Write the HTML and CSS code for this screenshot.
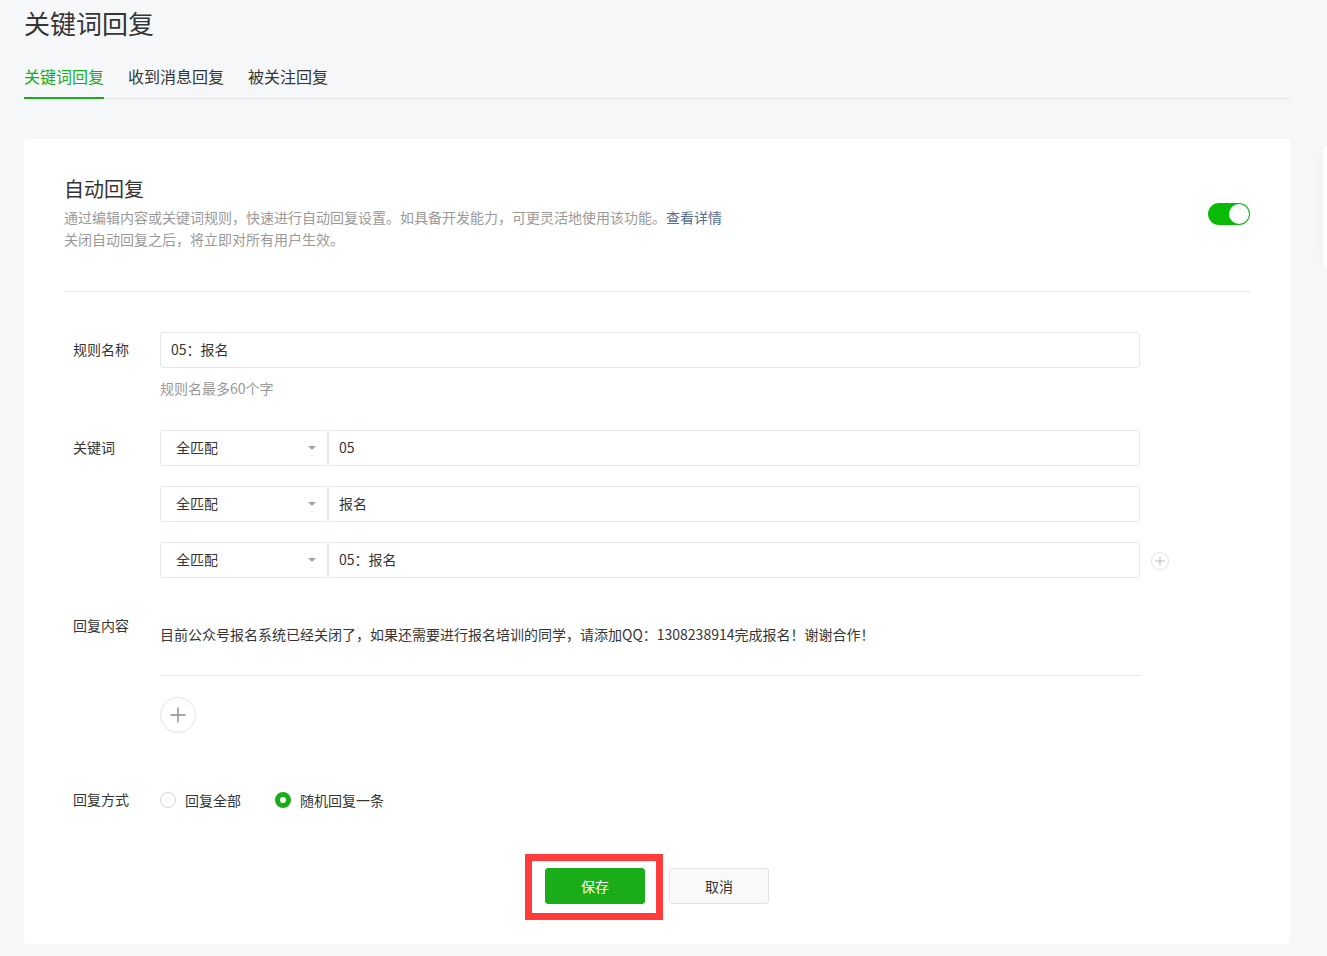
FILE: index.html
```html
<!DOCTYPE html>
<html lang="zh-CN">
<head>
<meta charset="utf-8">
<title>关键词回复</title>
<link rel="stylesheet" href="styles.css">
</head>
<body>
<div class="page">
  <h1 class="title">关键词回复</h1>
  <nav class="tabs">
    <span class="tab active">关键词回复</span>
    <span class="tab">收到消息回复</span>
    <span class="tab">被关注回复</span>
  </nav>
  <section class="card">
    <div class="card-head">
      <div class="head-text">
        <h2 class="head-title">自动回复</h2>
        <p class="desc">通过编辑内容或关键词规则，快速进行自动回复设置。如具备开发能力，可更灵活地使用该功能。<a class="link">查看详情</a></p>
        <p class="desc">关闭自动回复之后，将立即对所有用户生效。</p>
      </div>
      <div class="toggle"><span class="knob"></span></div>
    </div>

    <div class="form">
      <div class="row row-name">
        <div class="label">规则名称</div>
        <div class="field">
          <div class="input">05：报名</div>
          <div class="hint">规则名最多60个字</div>
        </div>
      </div>

      <div class="row row-kw">
        <div class="label">关键词</div>
        <div class="field kw-list">
          <div class="kw-line">
            <div class="select">全匹配<span class="arrow"></span></div>
            <div class="input kw-input">05</div>
          </div>
          <div class="kw-line">
            <div class="select">全匹配<span class="arrow"></span></div>
            <div class="input kw-input">报名</div>
          </div>
          <div class="kw-line">
            <div class="select">全匹配<span class="arrow"></span></div>
            <div class="input kw-input">05：报名</div>
            <span class="mini-add">
              <svg width="18" height="18" viewBox="0 0 18 18"><circle cx="9" cy="9" r="8.5" fill="none" stroke="#e2e2e2"/><path d="M9 4.5v9M4.5 9h9" stroke="#b5b5b5" stroke-width="1"/></svg>
            </span>
          </div>
        </div>
      </div>

      <div class="row row-reply">
        <div class="label">回复内容</div>
        <div class="field">
          <div class="editor">目前公众号报名系统已经关闭了，如果还需要进行报名培训的同学，请添加QQ：1308238914完成报名！谢谢合作！</div>
          <span class="big-add">
            <svg width="36" height="36" viewBox="0 0 36 36"><circle cx="18" cy="18" r="17.5" fill="#fff" stroke="#e4e4e4"/><path d="M18 10.5v15M10.5 18h15" stroke="#8c8c8c" stroke-width="1.4"/></svg>
          </span>
        </div>
      </div>

      <div class="row row-mode">
        <div class="label">回复方式</div>
        <div class="field radios">
          <label class="radio"><span class="dot"></span>回复全部</label>
          <label class="radio"><span class="dot checked"></span>随机回复一条</label>
        </div>
      </div>
    </div>

    <div class="actions">
      <button class="btn btn-primary">保存</button>
      <button class="btn btn-default">取消</button>
    </div>
  </section>
</div>
<div class="side-panel"></div>
</body>
</html>
```

FILE: styles.css
```css
* { box-sizing: border-box; }

html, body {
  margin: 0;
  padding: 0;
}

body {
  background: #f6f7f9;
  font-family: "Noto Sans CJK SC", "Microsoft YaHei", sans-serif;
  color: #353535;
  font-size: 14px;
  min-height: 956px;
  overflow: hidden;
}

.page {
  margin-left: 24px;
  width: 1266px;
}

.title {
  margin: 0;
  font-size: 26px;
  font-weight: normal;
  line-height: 46px;
  padding-bottom: 2px;
  color: #353535;
}

.tabs {
  display: flex;
  gap: 24px;
  border-bottom: 1px solid #e2e2e4;
}

.tab {
  font-size: 16px;
  line-height: 24px;
  padding: 16px 0 9px;
  border-bottom: 2px solid transparent;
  margin-bottom: -1px;
  color: #353535;
}

.tab.active {
  color: #1aad19;
  border-bottom-color: #1aad19;
}

.card {
  margin-top: 40px;
  background: #fff;
  border-radius: 4px;
  padding: 36px 40px 40px;
}

.card-head {
  display: flex;
  justify-content: space-between;
  align-items: center;
  padding-bottom: 41px;
  border-bottom: 1px solid #e7e7eb;
}

.head-title {
  margin: 0 0 3px;
  font-size: 20px;
  font-weight: normal;
  line-height: 28px;
  color: #353535;
}

.desc {
  margin: 0;
  font-size: 14px;
  line-height: 22px;
  color: #9a9a9a;
}

.link {
  color: #576b95;
  text-decoration: none;
}

.toggle {
  position: relative;
  width: 42px;
  height: 22px;
  border-radius: 11px;
  background: #09bb07;
  margin-top: 3px;
}

.knob {
  position: absolute;
  right: 1px;
  top: 1px;
  width: 20px;
  height: 20px;
  border-radius: 50%;
  background: #fff;
}

.form {
  padding: 40px 0 0 9px;
}

.row {
  display: flex;
  align-items: flex-start;
}

.label {
  width: 87px;
  flex: none;
  line-height: 34px;
  padding-bottom: 2px;
  font-size: 14px;
  color: #353535;
}

.field {
  width: 980px;
  flex: none;
}

.input {
  height: 36px;
  line-height: 32px;
  border: 1px solid #e4e8eb;
  border-radius: 3px;
  padding: 0 10px;
  font-size: 14px;
  color: #353535;
  background: #fff;
}

.hint {
  margin-top: 9px;
  line-height: 22px;
  padding-bottom: 1px;
  color: #9a9a9a;
  font-size: 14px;
}

.row-name { margin-bottom: 30px; }

.kw-list {
  display: flex;
  flex-direction: column;
  gap: 20px;
}

.kw-line {
  display: flex;
  align-items: center;
  width: 980px;
}

.select {
  position: relative;
  width: 168px;
  flex: none;
  height: 36px;
  line-height: 32px;
  border: 1px solid #e4e8eb;
  border-radius: 3px;
  padding: 0 15px;
  font-size: 14px;
  color: #353535;
}

.arrow {
  position: absolute;
  right: 11px;
  top: 15px;
  width: 0;
  height: 0;
  border-left: 4px solid transparent;
  border-right: 4px solid transparent;
  border-top: 4px solid #a3a3a3;
}

.kw-input {
  width: 812px;
  flex: none;
}

.mini-add {
  display: flex;
  margin-left: 11px;
  flex: none;
  width: 18px;
  height: 18px;
  margin-top: 2px;
}

.row-kw { margin-bottom: 30px; }

.editor {
  padding: 15px 0 30px;
  line-height: 22px;
  font-size: 14px;
  color: #353535;
  border-bottom: 1px solid #e7e7eb;
}

.big-add {
  display: flex;
  width: 36px;
  height: 36px;
  margin-top: 21px;
}

.row-reply { margin-bottom: 49px; }

.radios {
  display: flex;
  align-items: center;
  gap: 34px;
  height: 36px;
}

.radio {
  display: flex;
  align-items: center;
  gap: 9px;
  font-size: 14px;
  color: #353535;
}

.dot {
  width: 16px;
  height: 16px;
  border-radius: 50%;
  border: 1px solid #d6d6d6;
  background: #fff;
}

.dot.checked {
  border: 5px solid #1aad19;
}

.actions {
  display: flex;
  justify-content: center;
  gap: 24px;
  margin-top: 50px;
}

.btn {
  width: 100px;
  height: 36px;
  border-radius: 3px;
  font-family: inherit;
  font-size: 14px;
  padding: 0;
  cursor: pointer;
}

.btn-primary {
  position: relative;
  background: #1aad19;
  color: #fff;
  border: 1px solid #1aad19;
}

.btn-primary::after {
  content: "";
  position: absolute;
  top: -15px;
  left: -21px;
  right: -19px;
  bottom: -17px;
  border: 7px solid #ff3b3b;
}

.btn-default {
  background: #f9f9f9;
  color: #353535;
  border: 1px solid #e4e4e4;
}

.side-panel {
  position: absolute;
  right: 0;
  top: 146px;
  width: 4px;
  height: 120px;
  background: #fff;
  border-radius: 4px 0 0 4px;
  box-shadow: 0 0 14px rgba(0, 0, 0, 0.05);
}
```
